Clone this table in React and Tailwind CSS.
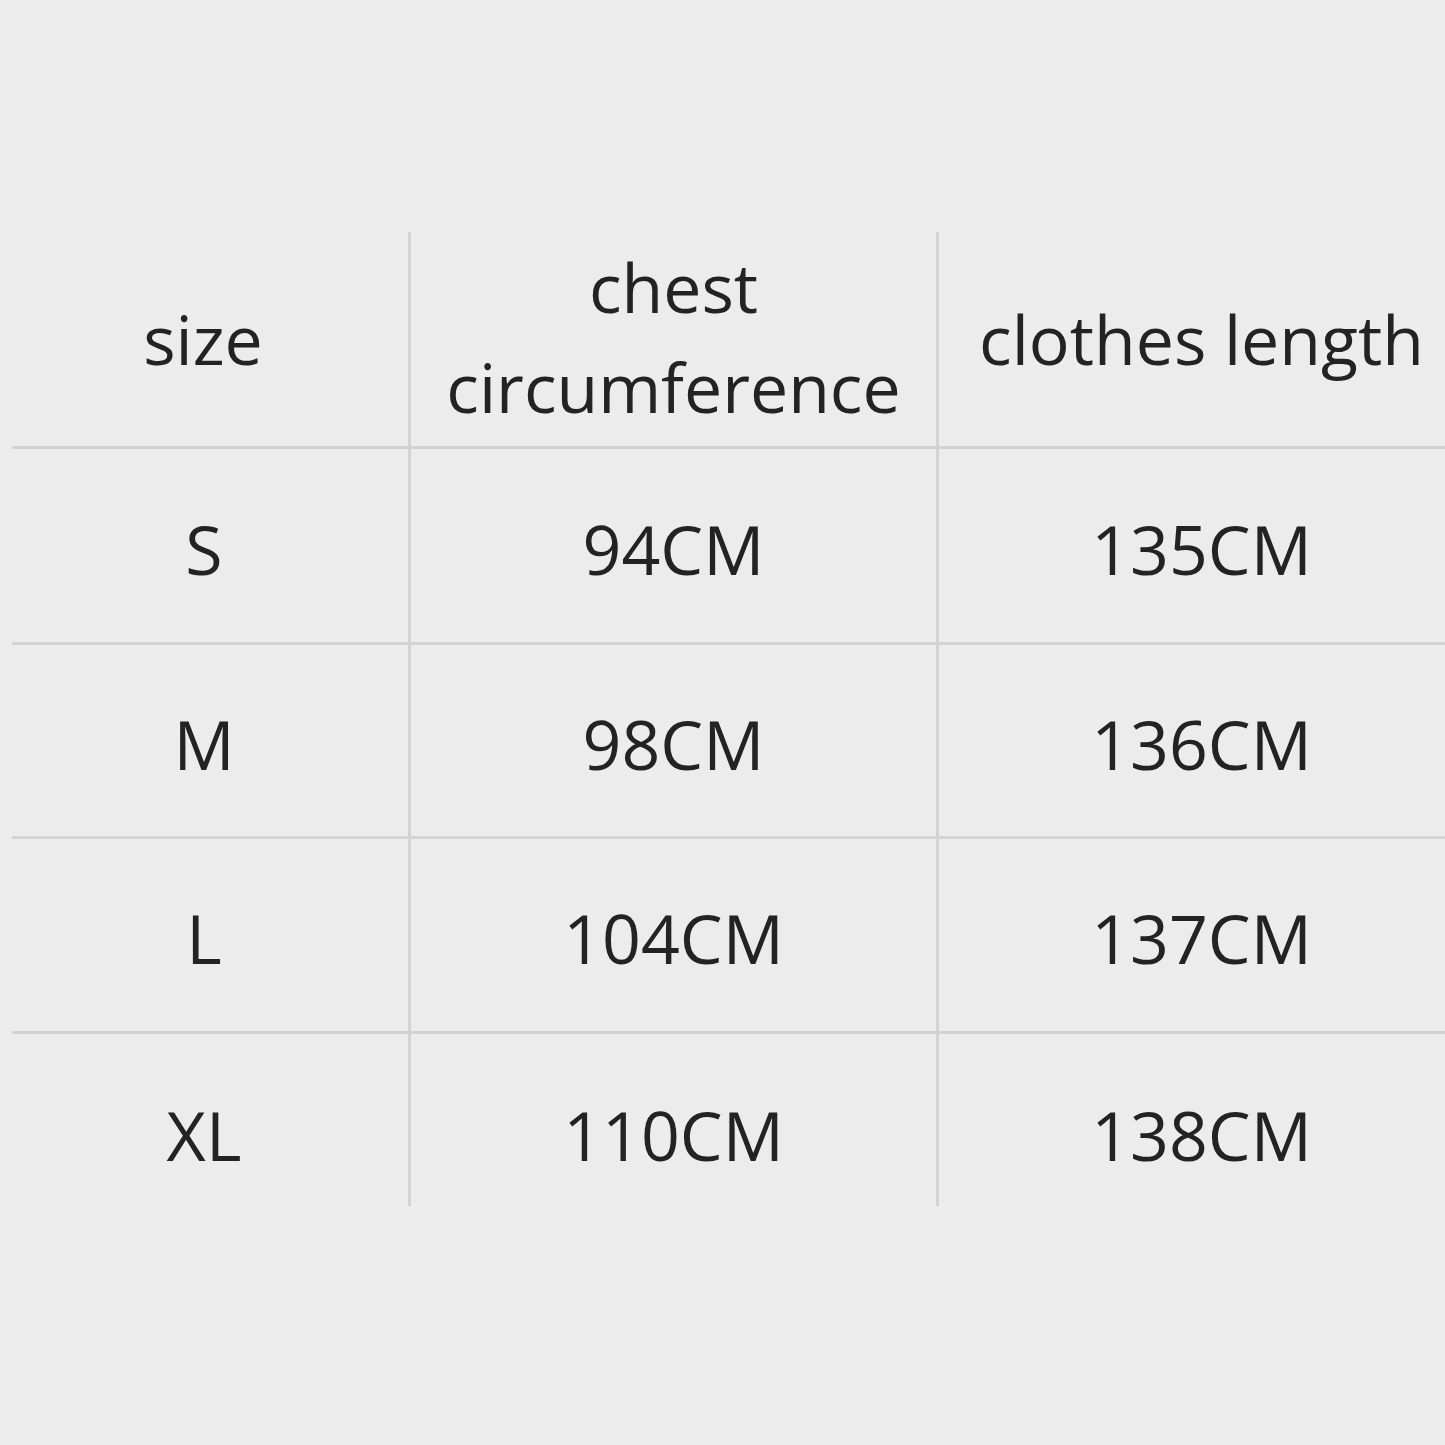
import React from 'react';

const rows = [
  { size: 'S', chest: '94CM', length: '135CM' },
  { size: 'M', chest: '98CM', length: '136CM' },
  { size: 'L', chest: '104CM', length: '137CM' },
  { size: 'XL', chest: '110CM', length: '138CM' },
];

const rowStyles = [
  'h-[196px] border-b-[3px] border-[#d3d3d3] pt-[6px]',
  'h-[194px] border-b-[3px] border-[#d3d3d3] pt-[6px]',
  'h-[195px] border-b-[3px] border-[#d3d3d3] pt-[6px]',
  'h-[172px] pt-[30px]',
];

const App = () => {
  return (
    <div
      className="w-[1445px] h-[1445px] overflow-hidden bg-[#ececec] text-[#232323] pt-[232px] pl-[12px]"
      style={{ fontFamily: '"Open Sans", "Noto Sans", sans-serif' }}
    >
      <div className="w-[1452px] text-[68px] leading-none">
        {/* Header */}
        <div className="flex h-[217px] border-b-[3px] border-[#d3d3d3]">
          <div className="w-[396px] flex items-center justify-center pr-[14px]">size</div>
          <div className="w-[528px] border-l-[3px] border-[#d3d3d3] flex flex-col items-center justify-center leading-[100px] pb-[4px]">
            <span>chest</span>
            <span>circumference</span>
          </div>
          <div className="w-[528px] border-l-[3px] border-[#d3d3d3] flex items-center justify-center">
            clothes length
          </div>
        </div>

        {rows.map((row, i) => (
          <div key={row.size} className="flex">
            <div className={`w-[396px] flex items-center justify-center pr-[12px] ${rowStyles[i]}`}>
              {row.size}
            </div>
            <div className={`w-[528px] border-l-[3px] border-l-[#d3d3d3] flex items-center justify-center ${rowStyles[i]}`}>
              {row.chest}
            </div>
            <div className={`w-[528px] border-l-[3px] border-l-[#d3d3d3] flex items-center justify-center ${rowStyles[i]}`}>
              {row.length}
            </div>
          </div>
        ))}
      </div>
    </div>
  );
};

export default App;
